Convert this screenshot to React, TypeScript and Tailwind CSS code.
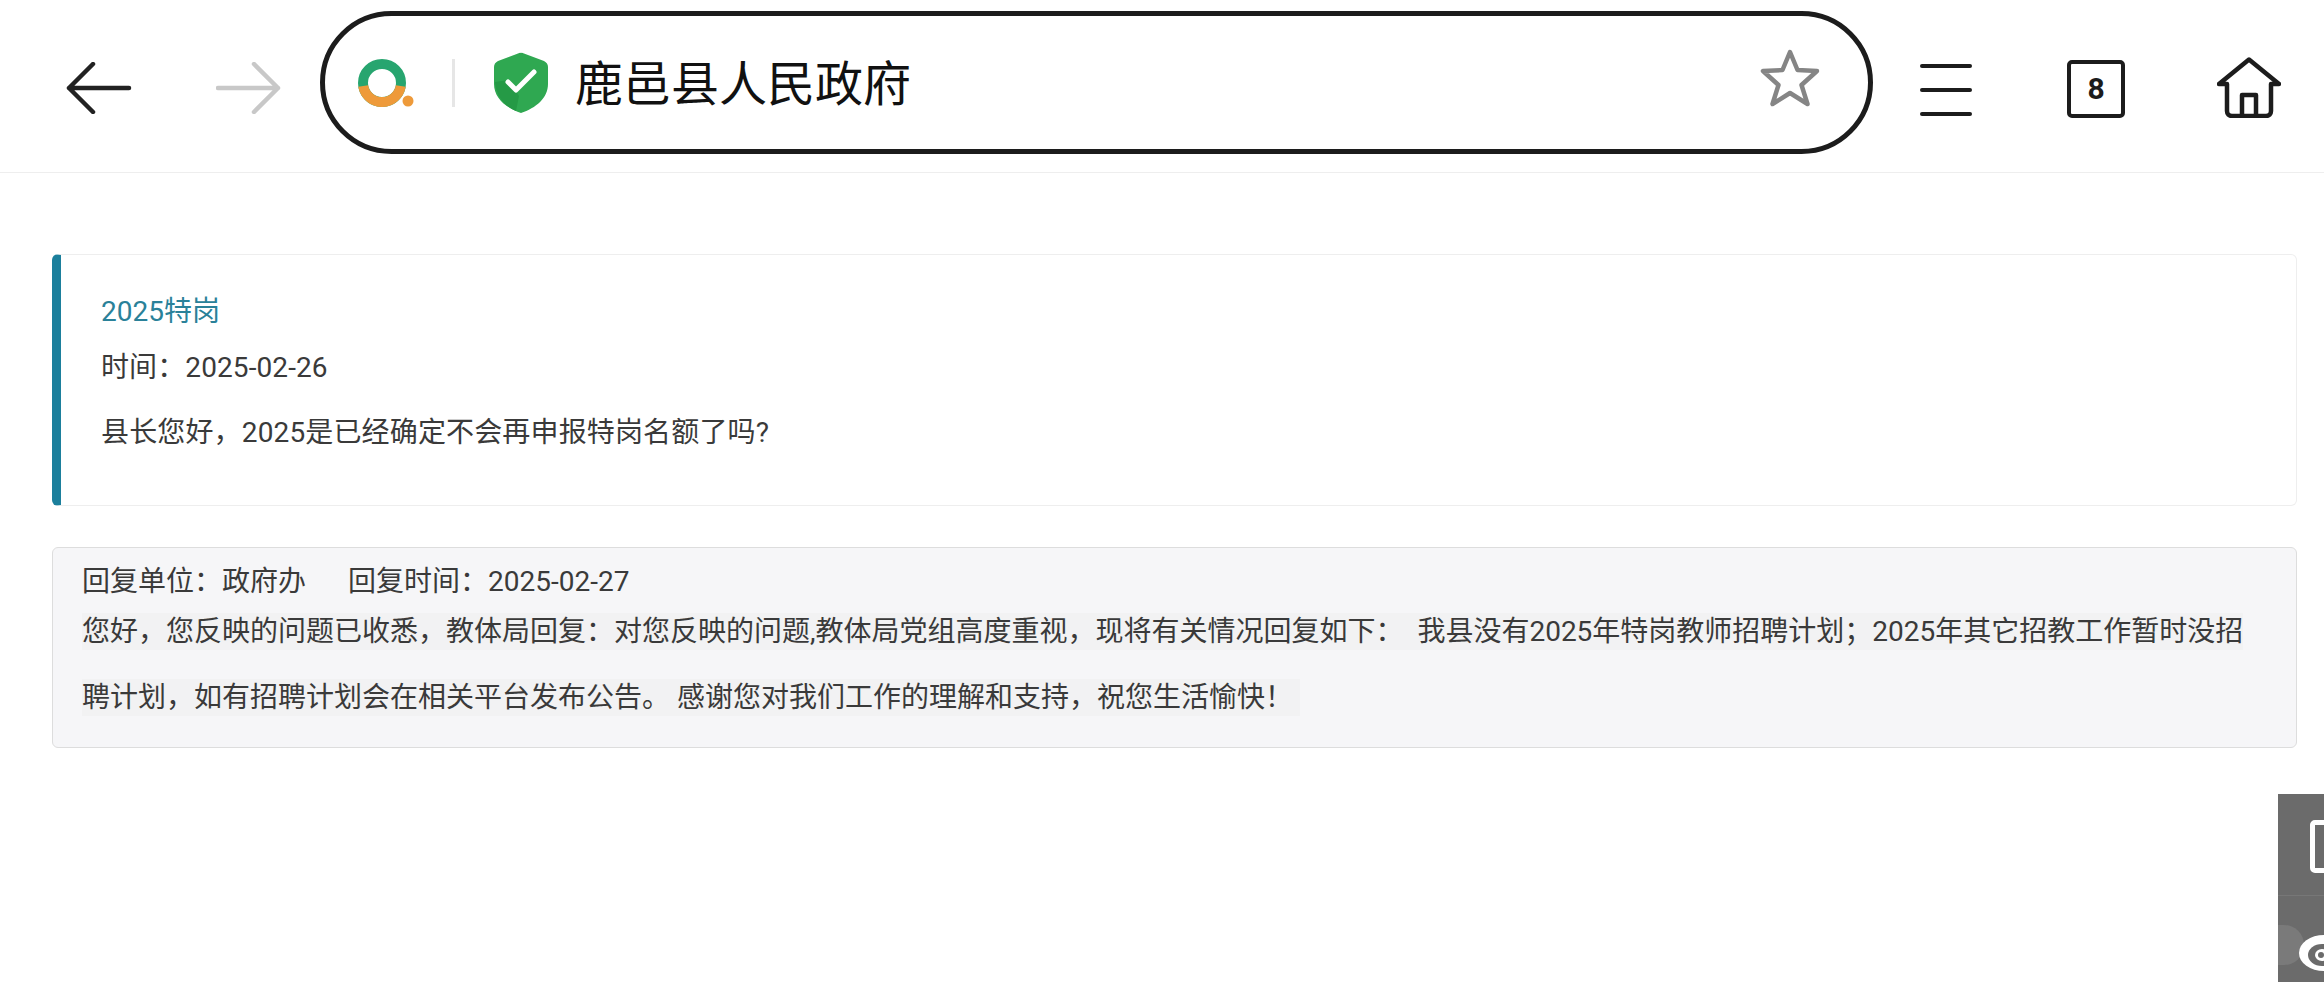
export default function App() {
  const font = { fontFamily: 'Roboto, "Noto Sans CJK SC", sans-serif' };
  return (
    <div className="relative h-[982px] w-[2324px] overflow-hidden bg-white" style={font}>
      <header className="flex h-[173px] items-center border-b border-[#eeeeee] pb-[7px] pl-[66px]">
        <svg className="mt-[11px] h-[52px] w-[66px]" viewBox="0 0 66 52" fill="none" stroke="#222222" strokeWidth="4.5" strokeLinecap="round" strokeLinejoin="round">
          <path d="M63 26H3M27 2 3 26l24 24" />
        </svg>
        <svg className="ml-[84px] mt-[11px] h-[52px] w-[66px]" viewBox="0 0 66 52" fill="none" stroke="#c8c8c8" strokeWidth="4.5" strokeLinecap="round" strokeLinejoin="round">
          <path d="M2 26h60M38 2l24 24-24 24" />
        </svg>
        <div className="ml-[38px] flex h-[143px] w-[1553px] items-center rounded-[72px] border-[5px] border-[#1c1c1c] pl-[33px]">
          <svg className="h-[48px] w-[56px]" viewBox="0 0 56 48" fill="none">
            <circle cx="24" cy="24" r="19" stroke="#27a56f" strokeWidth="10" />
            <path d="M5.240 27A19 19 0 0 0 42.760 27" stroke="#ee9a3a" strokeWidth="10" />
            <circle cx="50" cy="42" r="5.5" fill="#ee9a3a" />
          </svg>
          <div className="ml-[38px] h-[48px] w-[3px] bg-[#e6e6e6]" />
          <svg className="ml-[39px] h-[61px] w-[54px]" viewBox="0 0 54 61">
            <path d="M27 1Q28 .5 30 1.5L50 9Q54 11 54 15V32C54 46 42 56 27 61 12 56 0 46 0 32V15Q0 11 4 9L24 1.5Q26 .5 27 1Z" fill="#2fa851" />
            <path d="M1 30 15 28 25 44 22 59C10 54 2 44 1 30Z" fill="#259a46" />
            <path d="m14 30 8 8 18-18" fill="none" stroke="#ffffff" strokeWidth="5" strokeLinecap="round" strokeLinejoin="round" />
          </svg>
          <div className="ml-[27px] mt-[4px] text-[48px] leading-[60px] text-[#111111]">鹿邑县人民政府</div>
          <svg className="mb-[9px] ml-auto mr-[48px] h-[58px] w-[60px]" viewBox="0 0 60 58" fill="none" stroke="#858585" strokeWidth="4.5" strokeLinejoin="round">
            <path d="M30 3 37.500 21 57 22 41.500 36 47.500 55 30 44 12.500 55 18.500 36 3 22 22.500 21Z" />
          </svg>
        </div>
        <div className="ml-[47px] mt-[15px] flex h-[52px] w-[52px] flex-col justify-between">
          <div className="h-[4px] rounded-full bg-[#1c1c1c]" />
          <div className="h-[4px] rounded-full bg-[#1c1c1c]" />
          <div className="h-[4px] rounded-full bg-[#1c1c1c]" />
        </div>
        <div className="ml-[95px] mt-[12px] flex h-[58px] w-[58px] items-center justify-center rounded-[5px] border-[4px] border-[#1c1c1c] text-[30px] font-bold leading-none text-[#1c1c1c]">8</div>
        <svg className="ml-[92px] mt-[10px] h-[61px] w-[64px]" viewBox="0 0 64 61" fill="none" stroke="#1c1c1c" strokeWidth="4.5" strokeLinecap="round" strokeLinejoin="round">
          <path d="M2 27 32 2.500 62 27H54V54c0 3-2 5-5 5H15c-3 0-5-2-5-5V27Z" />
          <path d="M25 59V38H39V59" />
        </svg>
      </header>

      <main className="ml-[52px] mr-[27px] pt-[81px]">
        <section className="h-[252px] rounded-[6px] border border-l-[9px] border-[#eeeeee] border-l-[#1b7f9c] pl-[40px] pt-[35px] text-[28px] leading-[44px] text-[#3a3a3a]">
          <div className="text-[#2a8199]">2025特岗</div>
          <div className="mt-[12px] tracking-[0.1px]">时间：2025-02-26</div>
          <div className="mt-[21px] tracking-[0.15px]">县长您好，2025是已经确定不会再申报特岗名额了吗?</div>
        </section>

        <section className="mt-[41px] h-[201px] rounded-[6px] border border-[#dddddd] bg-[#f6f6f8] pl-[29px] pr-[40px] pt-[17px] text-[28px] text-[#3a3a3a]">
          <div className="flex gap-[42px] leading-[34px]">
            <span>回复单位：政府办</span>
            <span>回复时间：2025-02-27</span>
          </div>
          <p className="leading-[66px]">
            <span className="bg-[#f2f2f3] py-[2px]">
              您好，您反映的问题已收悉，教体局回复：对您反映的问题,教体局党组高度重视，现将有关情况回复如下：&nbsp;&nbsp;我县没有2025年特岗教师招聘计划；2025年其它招教工作暂时没招聘计划，如有招聘计划会在相关平台发布公告。&nbsp;感谢您对我们工作的理解和支持，祝您生活愉快！&nbsp;
            </span>
          </p>
        </section>
      </main>

      <aside className="absolute bottom-0 right-0 h-[188px] w-[46px] overflow-hidden bg-[#6b6b6b]">
        <div className="absolute left-[32px] top-[26px] h-[53px] w-[40px] rounded-[5px] border-[5px] border-white" />
        <div className="absolute left-0 top-[101px] h-px w-full bg-[#777777]" />
        <div className="absolute left-0 top-[131px] h-[40px] w-[26px] rounded-r-full bg-[#7a7a7a]" />
        <svg className="absolute left-[19px] top-[138px] h-[42px] w-[27px]" viewBox="0 0 27 42" fill="none">
          <ellipse cx="27" cy="21" rx="25" ry="18" fill="#ffffff" />
          <ellipse cx="25" cy="23" rx="14" ry="11" fill="#6b6b6b" />
          <ellipse cx="25" cy="23" rx="7" ry="6" fill="#ffffff" />
          <circle cx="24" cy="23" r="3" fill="#6b6b6b" />
        </svg>
      </aside>
    </div>
  );
}
